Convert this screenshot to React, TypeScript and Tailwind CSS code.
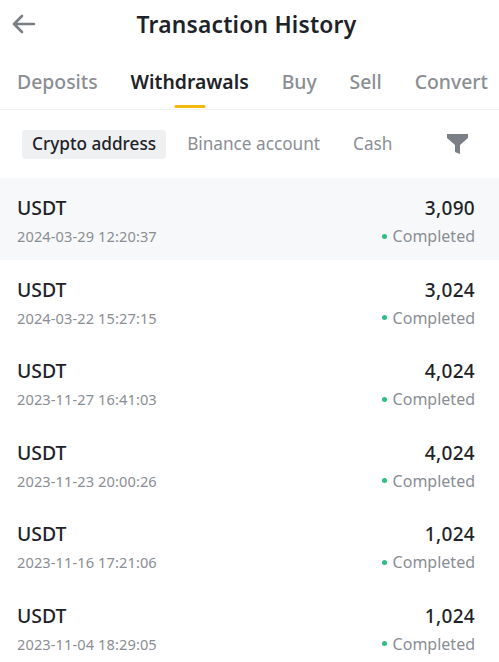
import React from "react";

const rows = [
  { date: "2024-03-29 12:20:37", amt: "3,090" },
  { date: "2024-03-22 15:27:15", amt: "3,024" },
  { date: "2023-11-27 16:41:03", amt: "4,024" },
  { date: "2023-11-23 20:00:26", amt: "4,024" },
  { date: "2023-11-16 17:21:06", amt: "1,024" },
  { date: "2023-11-04 18:29:05", amt: "1,024" },
];

export default function App() {
  return (
    <div className="w-[499px] h-[662px] overflow-hidden bg-white text-[#1e2329]" style={{ fontFamily: '"Noto Sans", "Open Sans", sans-serif' }}>
      <div className="relative h-[50px] flex items-center justify-center">
        <svg className="absolute left-[12px] top-[14px]" width="24" height="20" viewBox="0 0 24 20" fill="none" stroke="#7a7e85" strokeWidth="2.6" strokeLinecap="round" strokeLinejoin="round">
          <path d="M22 10H3M10 2L2 10l8 8" />
        </svg>
        <span className="text-[22.8px] font-semibold tracking-[0.2px] ml-[-6px]">Transaction History</span>
      </div>
      <div className="h-[60px] flex items-center justify-between pl-[17px] pr-[11px] pt-[5px] border-b border-[#f0f1f2] text-[19.4px] font-medium text-[#8a8e94]">
        <span>Deposits</span>
        <span className="relative text-[#1e2329] font-semibold">
          Withdrawals
          <span className="absolute left-1/2 -translate-x-1/2 bottom-[-11px] w-[31px] h-[3px] rounded bg-[#f0b90b]" />
        </span>
        <span>Buy</span>
        <span>Sell</span>
        <span>Convert</span>
      </div>
      <div className="h-[68px] flex items-center pl-[22px] pr-[31px] text-[17.2px] text-[#8a8e94]">
        <span className="h-[29px] px-[10px] flex items-center rounded bg-[#eef0f2] text-[#1e2329] font-medium">Crypto address</span>
        <span className="ml-[21px]">Binance account</span>
        <span className="ml-[33px]">Cash</span>
        <svg className="ml-auto" width="21" height="22" viewBox="0 0 21 22" fill="#7a7e85">
          <path d="M0 1h21v4L13 12v9l-5-2v-7L0 5z" />
        </svg>
      </div>
      <div>
        {rows.map((r, i) => (
          <div key={i} className={`h-[81.5px] flex justify-between items-start pl-[17px] pr-[24px] pt-[16px] ${i === 0 ? "bg-[#f7f8f9]" : ""}`}>
            <div className="flex flex-col">
              <span className="text-[19.4px] font-medium leading-[28px]">USDT</span>
              <span className="text-[14.6px] text-[#8a8e94] leading-[28px] tracking-[0.1px]">{r.date}</span>
            </div>
            <div className="flex flex-col items-end">
              <span className="text-[19px] font-medium leading-[28px] tracking-[0.3px]">{r.amt}</span>
              <span className="text-[16px] text-[#8a8e94] leading-[28px] flex items-center">
                <span className="w-[5px] h-[5px] rounded-full bg-[#2ebd85] mr-[6px]" />
                Completed
              </span>
            </div>
          </div>
        ))}
      </div>
    </div>
  );
}
